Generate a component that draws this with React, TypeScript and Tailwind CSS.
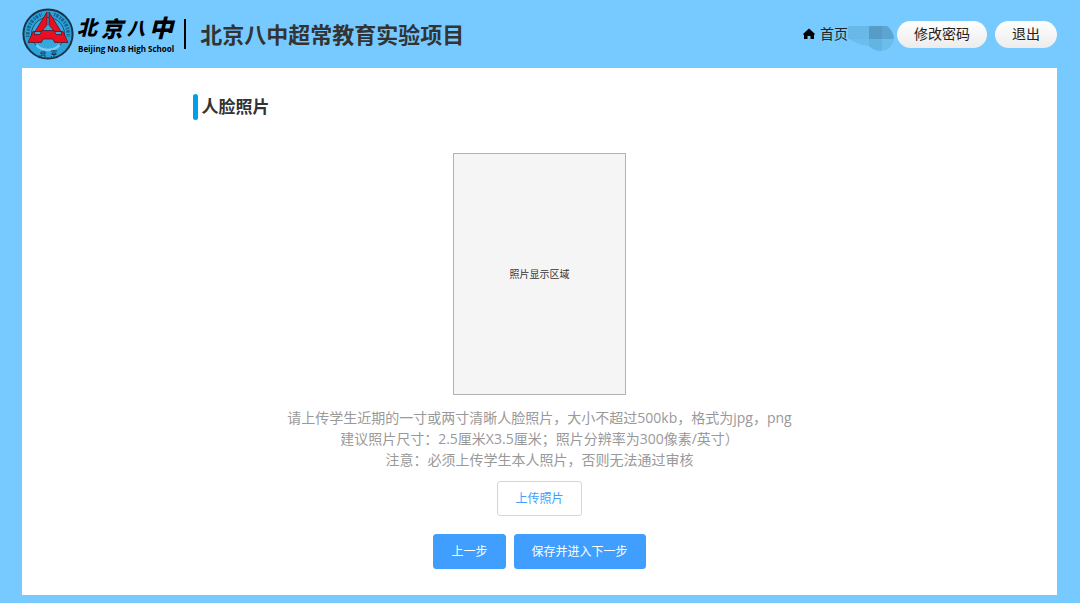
import type { ReactNode } from "react";
import clsx from "clsx";

interface ActionButtonProps {
  children: ReactNode;
  plain?: boolean;
}

function ActionButton({ children, plain = false }: ActionButtonProps) {
  return (
    <button
      type="button"
      className={clsx(
        "h-[35px] rounded-[3px] border px-[17px] text-xs",
        plain
          ? "border-[#b9dcff] bg-white text-[#409eff]"
          : "border-[#409eff] bg-[#409eff] text-white"
      )}
    >
      {children}
    </button>
  );
}

function PillButton({ children }: { children: ReactNode }) {
  return (
    <button
      type="button"
      className="h-[27px] rounded-full bg-linear-to-b from-white to-[#ececec] px-[17px] text-sm text-[#222]"
    >
      {children}
    </button>
  );
}

function Emblem() {
  return (
    <svg viewBox="0 0 52 52" className="size-[52px] shrink-0" aria-hidden="true">
      <circle cx="26" cy="26" r="24.6" fill="#2ba3da" stroke="#1b3448" strokeWidth="2" />
      <path
        d="M6 29A20.500 20.500 0 0 1 20 6.500M32 6.500A20.500 20.500 0 0 1 46 29"
        fill="none"
        stroke="#17547a"
        strokeWidth="3.500"
        strokeDasharray="1.500 1 2.500 1.400"
        opacity="0.8"
      />
      <circle cx="26" cy="26" r="16.500" fill="#35a9df" stroke="#1c506f" strokeWidth="1" />
      <g fill="#ea0f20" stroke="#4a1a2b" strokeWidth="0.8" strokeLinejoin="round">
        <path d="M25 4v13l-5.500 6.500h-6.500z" />
        <path d="M27 4v13l5.500 6.500h6.500z" />
        <path d="M20 22.500h12l2 4h6l-1-3h2L46 34.500H32.500L31 31H21l-1.500 3.500H6l5-11h2l-1 3h6z" />
      </g>
      <path d="M14.500 37c5 6.500 18 6.500 23 0" fill="none" stroke="#7ccaf2" strokeWidth="2.500" />
      <path
        d="M20 43v5m-2-3h2m-3 3h3m2-5v5h2m-2-3h2M29 43h6m-3-1v1m-2 2h4v1.500h-4zm2 2v2m-2-1-1 1m5-1 1 1"
        fill="none"
        stroke="#173b57"
      />
    </svg>
  );
}

function Brand() {
  return (
    <div className="flex items-center">
      <Emblem />
      <div className="ml-[3px] flex flex-col whitespace-nowrap text-black">
        <span className="flex items-end gap-1 leading-[30px] font-black italic">
          <span className="text-[20px]">北</span>
          <span className="text-[22px]">京</span>
          <span className="text-[18px]">八</span>
          <span className="text-[24px]">中</span>
        </span>
        <span className="pl-px text-[8px] leading-3 font-bold">Beijing No.8 High School</span>
      </div>
      <span className="ml-[10px] h-[30px] w-[2px] bg-black" />
      <h1 className="ml-[14px] text-[22px] leading-8 font-bold whitespace-nowrap text-[#333]">
        北京八中超常教育实验项目
      </h1>
    </div>
  );
}

function HomeIcon() {
  return (
    <svg viewBox="0 0 12 12" className="size-3" fill="#000" aria-hidden="true">
      <path d="M6 .5 12 6 11 7V11H7.500V8H4.500V11H1V7L0 6z" />
    </svg>
  );
}

// Pixelated patch that hides the account name
function MaskedName() {
  return (
    <svg viewBox="0 0 46 28" className="mt-2 h-7 w-[46px]" aria-hidden="true">
      <path d="M0 2h38q7 4 8 13-2 11-13 12-7 0-12-5Q9 21 0 14z" fill="#6bbdec" />
      <path d="M0 2h21v13H0z" fill="#69b9e8" />
      <path d="M21 2h13v13H21z" fill="#559cc7" />
      <path d="M34 2h5q6 4 7 13H34z" fill="#5ca5d1" />
      <path d="M21 15h13v12q-7 0-13-5z" fill="#62b4e3" />
    </svg>
  );
}

export default function App() {
  return (
    <div className="flex min-h-screen flex-col bg-[#76caff] pr-[23px] pb-2 pl-[22px] font-['Open_Sans','Noto_Sans_CJK_SC',sans-serif]">
      <header className="flex h-[68px] items-center justify-between">
        <Brand />
        <nav className="flex items-center">
          <a href="#home" className="flex items-center gap-[5px] text-sm text-[#222]">
            <HomeIcon />
            首页
          </a>
          <MaskedName />
          <div className="ml-[3px] flex gap-2">
            <PillButton>修改密码</PillButton>
            <PillButton>退出</PillButton>
          </div>
        </nav>
      </header>

      <main className="flex-1 bg-white pt-[26px] pb-6">
        <div className="mx-auto max-w-[694px]">
          <div className="flex items-center gap-1">
            <span className="h-[26px] w-[5px] rounded-full bg-[#009fe8]" />
            <h2 className="text-[17px] leading-[26px] font-bold text-[#333]">人脸照片</h2>
          </div>

          <div className="mt-[33px] flex flex-col items-center">
            <div className="flex h-[242px] w-[173px] items-center justify-center border border-[#b3b3b3] bg-[#f5f5f5] text-[10px] text-[#333]">
              照片显示区域
            </div>
            <p className="mt-3 text-center text-sm leading-[21px] text-[#999]">
              请上传学生近期的一寸或两寸清晰人脸照片，大小不超过500kb，格式为jpg，png
              <br />
              建议照片尺寸：2.5厘米X3.5厘米；照片分辨率为300像素/英寸）
              <br />
              注意：必须上传学生本人照片，否则无法通过审核
            </p>
            <div className="mt-[11px]">
              <ActionButton plain>上传照片</ActionButton>
            </div>
            <div className="mt-[18px] flex gap-2">
              <ActionButton>上一步</ActionButton>
              <ActionButton>保存并进入下一步</ActionButton>
            </div>
          </div>
        </div>
      </main>
    </div>
  );
}
